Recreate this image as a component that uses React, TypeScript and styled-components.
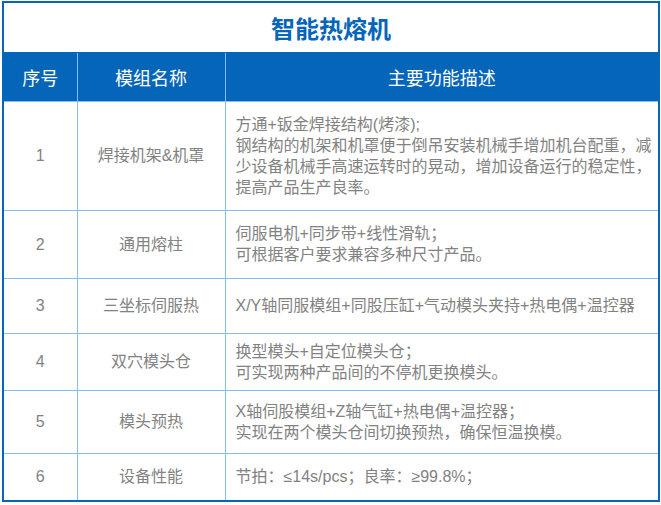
import styled, { createGlobalStyle } from "styled-components";

const GlobalStyle = createGlobalStyle`
  body {
    margin: 0;
    background: #ffffff;
    font-family: "Liberation Sans", "Noto Sans CJK SC", sans-serif;
  }
`;

const BLUE = "#0565b9";
const LINE = "#80bef5";
const TEXT = "#828282";

const Page = styled.div`
  padding: 1px 0 0 2px;
`;

const Table = styled.table`
  width: 658px;
  border-collapse: collapse;
  table-layout: fixed;
  border: 2px solid ${BLUE};
`;

const Row = styled.tr<{ $h: number }>`
  height: ${({ $h }) => $h}px;
`;

const TitleCell = styled.th`
  padding: 0;
  border: 1px solid ${BLUE};
  background: #ffffff;
  color: ${BLUE};
  font-size: 24px;
  font-weight: 700;
  text-align: center;
  vertical-align: middle;
`;

const HeadCell = styled.th`
  padding: 0;
  border: 1px solid ${LINE};
  border-top-color: ${BLUE};
  background: ${BLUE};
  color: #ffffff;
  font-size: 18px;
  font-weight: 400;
  text-align: center;
  vertical-align: middle;
`;

const Cell = styled.td<{ $left?: boolean }>`
  padding: ${({ $left }) => ($left ? "0 6px 0 10px" : "0")};
  border: 1px solid ${LINE};
  color: ${TEXT};
  font-size: 16px;
  line-height: 21px;
  text-align: ${({ $left }) => ($left ? "left" : "center")};
  vertical-align: middle;
  white-space: nowrap;
`;

const Line = styled.div`
  display: block;
`;

type Item = { no: number; name: string; desc: string[]; h: number };

const items: Item[] = [
  {
    no: 1,
    name: "焊接机架&机罩",
    desc: [
      "方通+钣金焊接结构(烤漆);",
      "钢结构的机架和机罩便于倒吊安装机械手增加机台配重，减",
      "少设备机械手高速运转时的晃动，增加设备运行的稳定性，",
      "提高产品生产良率。",
    ],
    h: 109,
  },
  {
    no: 2,
    name: "通用熔柱",
    desc: ["伺服电机+同步带+线性滑轨；", "可根据客户要求兼容多种尺寸产品。"],
    h: 68,
  },
  {
    no: 3,
    name: "三坐标伺服热",
    desc: ["X/Y轴同服模组+同股压缸+气动模头夹持+热电偶+温控器"],
    h: 55,
  },
  {
    no: 4,
    name: "双穴模头仓",
    desc: ["换型模头+自定位模头仓；", "可实现两种产品间的不停机更换模头。"],
    h: 57,
  },
  {
    no: 5,
    name: "模头预热",
    desc: ["X轴伺股模组+Z轴气缸+热电偶+温控器；", "实现在两个模头仓间切换预热，确保恒温换模。"],
    h: 63,
  },
  {
    no: 6,
    name: "设备性能",
    desc: ["节拍：≤14s/pcs；良率：≥99.8%；"],
    h: 48,
  },
];

export default function App() {
  return (
    <Page>
      <GlobalStyle />
      <Table>
        <colgroup>
          <col style={{ width: 74 }} />
          <col style={{ width: 148 }} />
          <col />
        </colgroup>
        <thead>
          <Row $h={50}>
            <TitleCell colSpan={3}>智能热熔机</TitleCell>
          </Row>
          <Row $h={49}>
            <HeadCell>序号</HeadCell>
            <HeadCell>模组名称</HeadCell>
            <HeadCell>主要功能描述</HeadCell>
          </Row>
        </thead>
        <tbody>
          {items.map((it) => (
            <Row key={it.no} $h={it.h}>
              <Cell>{it.no}</Cell>
              <Cell>{it.name}</Cell>
              <Cell $left>
                {it.desc.map((d) => (
                  <Line key={d}>{d}</Line>
                ))}
              </Cell>
            </Row>
          ))}
        </tbody>
      </Table>
    </Page>
  );
}
